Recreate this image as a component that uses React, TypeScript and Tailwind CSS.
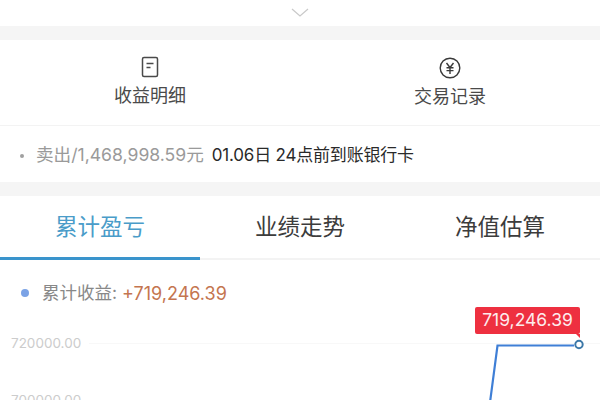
const cjk = "font-['Inter','Noto_Sans_CJK_SC',sans-serif]";

function DocIcon() {
  return (
    <svg width="18" height="22" viewBox="0 0 18 22" fill="none" stroke="#4a4a4a" strokeWidth="1.5">
      <rect x="1.5" y="1.5" width="15" height="19" rx="1.5" />
      <path d="M5.5 7.5H12.5M5.5 11.5H9.5" />
    </svg>
  );
}

function YenIcon() {
  return (
    <svg width="22" height="22" viewBox="0 0 22 22" fill="none" stroke="#3a3a3a" strokeWidth="1.4">
      <circle cx="11" cy="11" r="9.8" />
      <path d="M7.5 6L11 10.5L14.5 6M7.5 10.8H14.5M7.5 13.6H14.5M11 10.5V17" />
    </svg>
  );
}

function Action({ icon, label, offset }: { icon: React.ReactNode; label: string; offset: string }) {
  return (
    <div className={`flex flex-1 flex-col items-center ${offset}`}>
      <div className="flex h-[24px] items-center">{icon}</div>
      <div className="mt-[5px] text-[18px] leading-[24px] text-[#4a4a4a]">{label}</div>
    </div>
  );
}

export default function App() {
  return (
    <div className={`h-[400px] w-[600px] overflow-hidden bg-white ${cjk}`}>
      <div className="flex h-[26px] items-start justify-center pt-[8px]">
        <svg width="18" height="9" viewBox="0 0 18 9" fill="none" stroke="#c9c9c9" strokeWidth="1.2">
          <path d="M1 1L9 8L17 1" />
        </svg>
      </div>
      <div className="h-[14px] bg-[#f5f5f5]" />

      <div className="flex h-[86px] border-b border-[#f3f3f3] pt-[15px]">
        <Action icon={<DocIcon />} label="收益明细" offset="" />
        <Action icon={<YenIcon />} label="交易记录" offset="pt-[1px]" />
      </div>

      <div className="flex h-[56px] items-center pl-[20px] pt-[3px] text-[17.600px]">
        <span className="mr-[12px] h-[4px] w-[4px] rounded-full bg-[#a0a0a0]" />
        <span className="text-[#9a9a9a]">卖出/1,468,998.59元</span>
        <span className="ml-[8px] text-[17px] tracking-[-0.2px] text-[#2a2a2a]">01.06日 24点前到账银行卡</span>
      </div>
      <div className="h-[14px] bg-[#f5f5f5]" />

      <div className="flex h-[64px] border-b-2 border-[#f3f3f3] text-[22.500px]">
        <div className="relative flex w-[200px] items-center justify-center pb-[1px] text-[#4a9cc9]">
          累计盈亏
          <span className="absolute inset-x-0 -bottom-[2px] h-[3px] bg-[#3a94cc]" />
        </div>
        <div className="flex w-[200px] items-center justify-center pb-[1px] text-[#3c3c3c]">业绩走势</div>
        <div className="flex w-[200px] items-center justify-center pb-[1px] text-[#3c3c3c]">净值估算</div>
      </div>

      <div className="flex h-[66px] items-center pl-[21px] text-[17.500px]">
        <span className="mr-[13px] h-[8px] w-[8px] rounded-full bg-[#7ba3e6]" />
        <span className="text-[#888888]">累计收益:</span>
        <span className="ml-[5px] text-[18px] text-[#c4754f]">+719,246.39</span>
      </div>

      <div className="relative h-[74px]">
        <div className="flex items-center pl-[11px] pt-[8px] text-[13.5px] leading-[18px] text-[#cccccc]">
          <span>720000.00</span>
          <span className="ml-[8px] h-px flex-1 bg-[#f8f8f8]" />
        </div>
        <div className="mt-[39px] pl-[11px] text-[13.5px] leading-[18px] text-[#cccccc]">700000.00</div>

        <svg className="absolute left-0 top-0" width="600" height="74" viewBox="0 0 600 74" fill="none">
          <path d="M489 84L497.500 19.500H574" stroke="#3f7fd6" strokeWidth="2.2" />
          <circle cx="579" cy="18.500" r="3.700" fill="#ffffff" stroke="#3c78a8" strokeWidth="2" />
        </svg>

        <div className="absolute left-[475px] top-[-19px] flex h-[27px] w-[105px] items-center justify-center rounded-[2px] bg-[#ee3040] text-[17.500px] text-[#fdeced]">
          719,246.39
          <span className="absolute bottom-[-4px] right-0 h-0 w-0 border-l-[4px] border-t-[4px] border-l-transparent border-t-[#ee3040]" />
        </div>
      </div>
    </div>
  );
}
